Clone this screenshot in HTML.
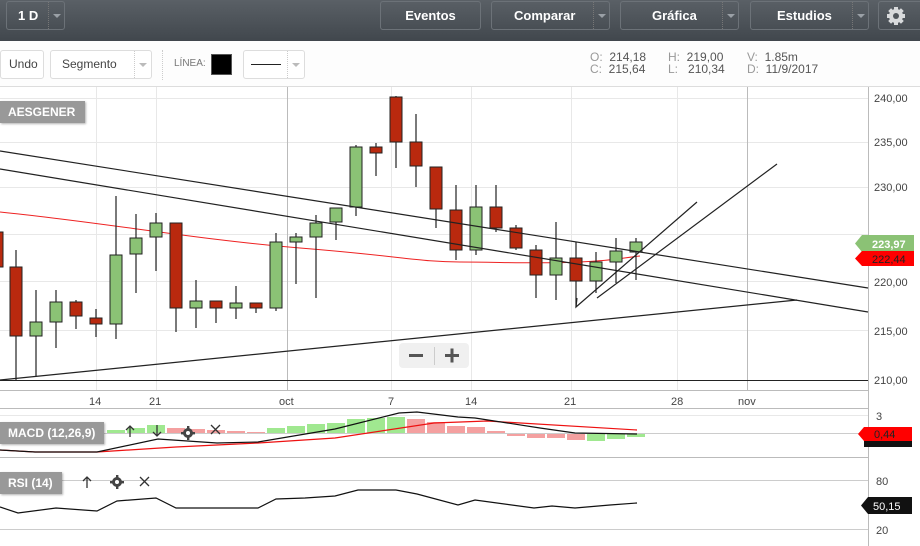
<!DOCTYPE html>
<html><head><meta charset="utf-8"><style>
*{margin:0;padding:0;box-sizing:border-box}
body{width:920px;height:546px;overflow:hidden;background:#fff;font-family:"Liberation Sans",sans-serif;position:relative}
.top{position:absolute;left:0;top:0;width:920px;height:41px;background:linear-gradient(#5a6066,#41474d)}
.btn{position:absolute;top:1px;height:29px;border:1px solid #6c7278;border-radius:3px;color:#fff;font-weight:bold;font-size:13px;line-height:27px}
.btn .dd{position:absolute;right:0;top:0;width:16px;height:27px;border-left:1px dotted #777}
.btn .dd:after{content:"";position:absolute;left:4px;top:12px;border:4px solid transparent;border-top:4px solid #9aa0a6}
.tb{position:absolute;left:0;top:41px;width:920px;height:46px;background:#fdfdfd;border-bottom:1px solid #ddd}
.wb{position:absolute;top:50px;height:29px;border:1px solid #ddd;border-radius:3px;background:#fff;font-size:12px;color:#444;line-height:27px}
.wb .dd{position:absolute;right:0;top:0;width:17px;height:27px;border-left:1px dotted #ccc}
.wb .dd:after{content:"";position:absolute;left:4px;top:12px;border:4px solid transparent;border-top:4px solid #bbb}
.ohl{position:absolute;font-size:12px;color:#555;line-height:12px}
.ohl b{font-weight:normal;color:#999}
.lbl{position:absolute;background:#999;color:#fff;font-weight:bold;font-size:12px;height:22px;line-height:22px;padding:0 8px;box-shadow:1px 1px 2px rgba(0,0,0,.3)}
</style></head><body>
<div class="top">
 <div class="btn" style="left:6px;width:59px;padding-left:11px">1 D<div class="dd"></div></div>
 <div class="btn" style="left:380px;width:101px;text-align:center">Eventos</div>
 <div class="btn" style="left:491px;width:119px;padding-left:22px">Comparar<div class="dd"></div></div>
 <div class="btn" style="left:620px;width:119px;padding-left:31px">Gráfica<div class="dd"></div></div>
 <div class="btn" style="left:750px;width:119px;padding-left:26px">Estudios<div class="dd"></div></div>
 <div class="btn" style="left:878px;width:50px;padding-left:6px"><svg width="22" height="22" viewBox="0 0 22 22" style="margin-top:3px"><g fill="#d8dadc"><circle cx="11" cy="11" r="7"/><rect x="9" y="2" width="4" height="18"/><rect x="2" y="9" width="18" height="4"/><rect x="9" y="2" width="4" height="18" transform="rotate(45 11 11)"/><rect x="9" y="2" width="4" height="18" transform="rotate(-45 11 11)"/></g><circle cx="11" cy="11" r="3" fill="#50565c"/></svg></div>
</div>
<div class="tb"></div>
<div class="wb" style="left:0;width:44px;padding-left:8px">Undo</div>
<div class="wb" style="left:50px;width:102px;padding-left:11px">Segmento<div class="dd"></div></div>
<div style="position:absolute;left:162px;top:50px;height:30px;border-left:1px dotted #ccc"></div>
<div style="position:absolute;left:174px;top:58px;font-size:10px;color:#777">LÍNEA:</div>
<div style="position:absolute;left:211px;top:54px;width:21px;height:21px;background:#000;border:1px solid #555"></div>
<div class="wb" style="left:243px;width:62px"><div style="position:absolute;left:7px;top:13px;width:30px;border-top:1px solid #222"></div><div class="dd"></div></div>
<div class="ohl" style="left:590px;top:51px"><b>O:</b>&nbsp; 214,18</div>
<div class="ohl" style="left:590px;top:63px"><b>C:</b>&nbsp; 215,64</div>
<div class="ohl" style="left:668px;top:51px"><b>H:</b>&nbsp; 219,00</div>
<div class="ohl" style="left:668px;top:63px"><b>L:</b>&nbsp;&nbsp; 210,34</div>
<div class="ohl" style="left:747px;top:51px"><b>V:</b>&nbsp; 1.85m</div>
<div class="ohl" style="left:747px;top:63px"><b>D:</b>&nbsp; 11/9/2017</div>

<svg style="position:absolute;left:0;top:87px" width="920" height="459" viewBox="0 87 920 459">
<g stroke="#e8e8e8" stroke-width="1">
 <line x1="0" y1="98.5" x2="868" y2="98.5"/><line x1="0" y1="142.5" x2="868" y2="142.5"/><line x1="0" y1="187.5" x2="868" y2="187.5"/><line x1="0" y1="234.5" x2="868" y2="234.5"/><line x1="0" y1="281.5" x2="868" y2="281.5"/><line x1="0" y1="330.5" x2="868" y2="330.5"/>
 <line x1="96.5" y1="87" x2="96.5" y2="390"/><line x1="156.5" y1="87" x2="156.5" y2="390"/><line x1="391.5" y1="87" x2="391.5" y2="390"/><line x1="471.5" y1="87" x2="471.5" y2="390"/><line x1="571.5" y1="87" x2="571.5" y2="390"/><line x1="677.5" y1="87" x2="677.5" y2="390"/>
 <line x1="0" y1="415.5" x2="868" y2="415.5"/><line x1="0" y1="480.5" x2="868" y2="480.5" stroke="#ccc"/><line x1="0" y1="529.5" x2="868" y2="529.5" stroke="#ccc"/>
</g>
<g stroke="#bbb"><line x1="287.5" y1="87" x2="287.5" y2="390"/><line x1="747.5" y1="87" x2="747.5" y2="390"/><line x1="0" y1="390.5" x2="868" y2="390.5"/><line x1="0" y1="408.5" x2="868" y2="408.5"/><line x1="0" y1="457.5" x2="868" y2="457.5"/><line x1="868.5" y1="87" x2="868.5" y2="546"/></g>
<line x1="0" y1="380.5" x2="868" y2="380.5" stroke="#222"/>
<g font-size="11" fill="#444">
<text x="874" y="102">240,00</text><text x="874" y="146">235,00</text><text x="874" y="191">230,00</text><text x="874" y="286">220,00</text><text x="874" y="335">215,00</text><text x="874" y="384">210,00</text>
<text x="89" y="405">14</text><text x="149" y="405">21</text><text x="279" y="405">oct</text><text x="388" y="405">7</text><text x="465" y="405">14</text><text x="564" y="405">21</text><text x="671" y="405">28</text><text x="738" y="405">nov</text>
<text x="876" y="420">3</text><text x="876" y="485">80</text><text x="876" y="534">20</text>
</g>
<path d="M0,212 C100,222 200,240 300,248 S420,262 460,262 S540,264 580,262 S620,258 640,256" fill="none" stroke="#e22" stroke-width="1"/>
<g stroke="#222" stroke-width="1.2">
<path d="M16,250V380M36,290V376M56,290V348M76,300V329M96,309V337M116,196V339M136,214V293M156,213V271M176,223V332M196,280V328M216,301V323M236,286V319M256,303V313M276,233V311M296,233V284M316,215V298M336,208V240M356,145V216M376,143V176M396,96V168M416,114V187M436,167V228M456,185V260M476,185V255M496,185V232M516,225V250M536,245V298M556,222V300M576,242V307M596,252V293M616,238V283M636,238V280"/>
</g>
<g stroke="#222" stroke-width="1">
<rect x="-5" y="232" width="8" height="35" fill="#b9290e"/>
<rect x="10" y="267" width="12" height="69" fill="#b9290e"/>
<rect x="30" y="322" width="12" height="14" fill="#8bc275"/>
<rect x="50" y="302" width="12" height="20" fill="#8bc275"/>
<rect x="70" y="302" width="12" height="14" fill="#b9290e"/>
<rect x="90" y="318" width="12" height="6" fill="#b9290e"/>
<rect x="110" y="255" width="12" height="69" fill="#8bc275"/>
<rect x="130" y="238" width="12" height="16" fill="#8bc275"/>
<rect x="150" y="223" width="12" height="14" fill="#8bc275"/>
<rect x="170" y="223" width="12" height="85" fill="#b9290e"/>
<rect x="190" y="301" width="12" height="7" fill="#8bc275"/>
<rect x="210" y="301" width="12" height="7" fill="#b9290e"/>
<rect x="230" y="303" width="12" height="5" fill="#8bc275"/>
<rect x="250" y="303" width="12" height="5" fill="#b9290e"/>
<rect x="270" y="242" width="12" height="66" fill="#8bc275"/>
<rect x="290" y="237" width="12" height="5" fill="#8bc275"/>
<rect x="310" y="223" width="12" height="14" fill="#8bc275"/>
<rect x="330" y="208" width="12" height="14" fill="#8bc275"/>
<rect x="350" y="147" width="12" height="60" fill="#8bc275"/>
<rect x="370" y="147" width="12" height="6" fill="#b9290e"/>
<rect x="390" y="97" width="12" height="45" fill="#b9290e"/>
<rect x="410" y="142" width="12" height="24" fill="#b9290e"/>
<rect x="430" y="167" width="12" height="42" fill="#b9290e"/>
<rect x="450" y="210" width="12" height="40" fill="#b9290e"/>
<rect x="470" y="207" width="12" height="43" fill="#8bc275"/>
<rect x="490" y="207" width="12" height="21" fill="#b9290e"/>
<rect x="510" y="228" width="12" height="20" fill="#b9290e"/>
<rect x="530" y="250" width="12" height="25" fill="#b9290e"/>
<rect x="550" y="258" width="12" height="17" fill="#8bc275"/>
<rect x="570" y="258" width="12" height="23" fill="#b9290e"/>
<rect x="590" y="262" width="12" height="19" fill="#8bc275"/>
<rect x="610" y="251" width="12" height="11" fill="#8bc275"/>
<rect x="630" y="242" width="12" height="10" fill="#8bc275"/>
</g>
<g stroke="#222" stroke-width="1.2" fill="none">
<line x1="0" y1="151" x2="868" y2="288"/>
<line x1="0" y1="169" x2="868" y2="312"/>
<line x1="0" y1="380" x2="797" y2="300"/>
<polyline points="697,202 576,307 577,298"/>
<line x1="597" y1="298" x2="777" y2="164"/>
</g>
<path d="M862,235H914V252H862L855,243.5Z" fill="#8bc275"/><text x="872" y="248" font-size="11" fill="#fff" font-weight="bold">223,97</text>
<path d="M862,251H914V266H862L855,258.5Z" fill="#f00"/><text x="872" y="263" font-size="11" fill="#222">222,44</text>
<rect x="399" y="343" width="70" height="25" rx="4" fill="#f0f0f0"/>
<rect x="409" y="354" width="14" height="3" fill="#555"/><rect x="445" y="354" width="14" height="3" fill="#555"/><rect x="450.5" y="348.5" width="3" height="14" fill="#555"/>
<line x1="434.5" y1="347" x2="434.5" y2="365" stroke="#ccc"/>
<line x1="0" y1="433.5" x2="868" y2="433.5" stroke="#ccc"/>
<g fill="#a0e890">
<rect x="107" y="430" width="18" height="3"/><rect x="127" y="428" width="18" height="5"/><rect x="147" y="425" width="18" height="8"/>
<rect x="267" y="428" width="18" height="5"/><rect x="287" y="426" width="18" height="7"/><rect x="307" y="424" width="18" height="9"/><rect x="327" y="423" width="18" height="10"/><rect x="347" y="419" width="18" height="14"/><rect x="367" y="418" width="18" height="15"/><rect x="387" y="417" width="18" height="16"/>
<rect x="587" y="434" width="18" height="7"/><rect x="607" y="434" width="18" height="5"/><rect x="627" y="434" width="18" height="3"/>
</g>
<g fill="#f4a0a0">
<rect x="167" y="428" width="18" height="5"/><rect x="187" y="429" width="18" height="4"/><rect x="207" y="430" width="18" height="3"/><rect x="227" y="431" width="18" height="2"/><rect x="247" y="432" width="18" height="1"/>
<rect x="407" y="419" width="18" height="14"/><rect x="427" y="422" width="18" height="11"/><rect x="447" y="426" width="18" height="7"/><rect x="467" y="427" width="18" height="6"/><rect x="487" y="431" width="18" height="2"/>
<rect x="507" y="434" width="18" height="2"/><rect x="527" y="434" width="18" height="4"/><rect x="547" y="434" width="18" height="4"/><rect x="567" y="434" width="18" height="6"/>
</g>
<polyline points="0,450 35,452 97,452 176,447 258,443 335,438 434,423 487,421 637,430" fill="none" stroke="#e11" stroke-width="1.2"/>
<polyline points="0,450 35,452 97,452 158,439 217,443 258,442 335,429 399,413 417,412 458,417 475,418 540,428 575,433 637,434" fill="none" stroke="#111" stroke-width="1.2"/>
<path d="M864,441H912V447H864Z" fill="#111"/>
<path d="M864,427H912V441H864L858,434Z" fill="#f00"/><text x="874" y="438" font-size="11" fill="#222">0,44</text>
<polyline points="0,507 18,513 56,508 97,511 117,501 156,498 176,508 217,508 258,508 276,499 305,498 335,496 358,490 396,490 417,494 458,505 475,500 534,508 552,506 575,508 610,505 637,503" fill="none" stroke="#111" stroke-width="1.2"/>
<path d="M868,497H912V514H868L861,505.5Z" fill="#111"/><text x="873" y="510" font-size="11" fill="#fff">50,15</text>
<g stroke="#333" stroke-width="1.3" fill="none">
<path d="M130,437V426M126,430L130,426L134,430"/><path d="M157,425V436M153,432L157,436L161,432"/>
<path d="M211,425L220,434M220,425L211,434"/>
<path d="M87,488V477M83,481L87,477L91,481"/>
<path d="M140,477L149,486M149,477L140,486"/>
</g>
<g fill="#444">
<circle cx="188" cy="433" r="5"/><rect x="187" y="426" width="2.4" height="14"/><rect x="181" y="432" width="14" height="2.4"/>
<circle cx="117" cy="482" r="5"/><rect x="116" y="475" width="2.4" height="14"/><rect x="110" y="481" width="14" height="2.4"/>
</g>
<circle cx="188" cy="433" r="2" fill="#fff"/><circle cx="117" cy="482" r="2" fill="#fff"/>
</svg>
<div class="lbl" style="left:0;top:101px;width:85px">AESGENER</div>
<div class="lbl" style="left:0;top:422px;width:104px">MACD (12,26,9)</div>
<div class="lbl" style="left:0;top:472px;width:62px">RSI (14)</div>
</body></html>
